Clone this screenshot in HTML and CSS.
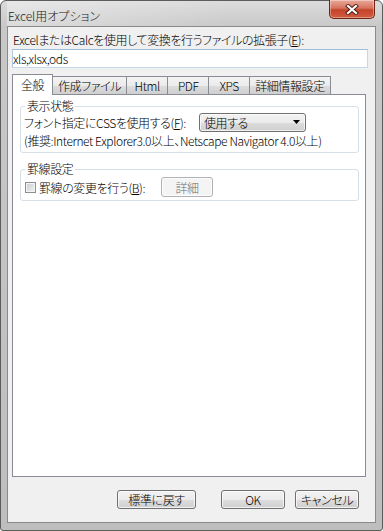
FILE: index.html
```html
<!DOCTYPE html>
<html lang="ja">
<head>
  <meta charset="UTF-8" />
  <title>Excel用オプション</title>
  <link rel="stylesheet" href="styles.css">
</head>
<body>

<div class="window">
  <div class="titlebar">
    <span class="title">Excel用オプション</span>
    <button class="close-btn" title="閉じる">
      <svg width="14" height="11" viewBox="0 0 14 11">
        <path d="M3 2 L11 9 M11 2 L3 9" stroke="#4a1c14" stroke-width="4" stroke-linecap="square" fill="none"/>
        <path d="M3 2 L11 9 M11 2 L3 9" stroke="#ffffff" stroke-width="2.2" stroke-linecap="square" fill="none"/>
      </svg>
    </button>
  </div>

  <div class="client">
    <label class="ext-label" for="extInput">ExcelまたはCalcを使用して変換を行うファイルの拡張子(<u>E</u>):</label>
    <input class="ext-input" id="extInput" type="text" value="xls,xlsx,ods" />

    <!-- Tabs -->
    <div class="tabs">
      <div class="tab active">全般</div>
      <div class="tab">作成ファイル</div>
      <div class="tab">Html</div>
      <div class="tab">PDF</div>
      <div class="tab">XPS</div>
      <div class="tab">詳細情報設定</div>
    </div>

    <div class="panel">
      <fieldset class="group group-view">
        <legend>表示状態</legend>
        <div class="row">
          <span class="row-label">フォント指定にCSSを使用する(<u>F</u>):</span>
          <div class="select">
            <span>使用する</span>
            <svg width="7" height="4" viewBox="0 0 7 4"><path d="M0 0 H7 L3.5 4 Z" fill="#000"/></svg>
          </div>
        </div>
        <div class="note">(推奨:Internet Explorer3.0以上、Netscape Navigator 4.0以上)</div>
      </fieldset>

      <fieldset class="group group-border">
        <legend>罫線設定</legend>
        <div class="row">
          <span class="checkbox"></span>
          <span class="check-label">罫線の変更を行う(<u>B</u>):</span>
          <button class="btn btn-detail" disabled>詳細</button>
        </div>
      </fieldset>
    </div>

    <div class="buttons">
      <button class="btn btn-reset">標準に戻す</button>
      <button class="btn btn-ok">OK</button>
      <button class="btn btn-cancel">キャンセル</button>
    </div>
  </div>
</div>

</body>
</html>
```

FILE: styles.css
```css
body {
  margin: 0;
  background: #ffffff;
  font-family: "Noto Sans CJK JP", "Liberation Sans", sans-serif;
  font-size: 12px;
  font-weight: 300;
  letter-spacing: -0.4px;
  font-feature-settings: "palt";
  color: #000;
}

.window {
  width: 383px;
  height: 531px;
  box-sizing: border-box;
  border: 1px solid #5c5c5c;
  border-radius: 6px 6px 3px 3px;
  background: linear-gradient(#dcdcdc, #c8c8c8 26px, #bebebe);
  padding: 0 6px 7px;
  display: flex;
  flex-direction: column;
}

.titlebar {
  height: 25px;
  display: flex;
  justify-content: space-between;
  align-items: flex-start;
  background: linear-gradient(90deg, rgba(255,255,255,0.35), rgba(255,255,255,0) 60%);
}

.title {
  padding: 6px 0 0 1px;
  line-height: 17px;
  font-size: 12px;
  letter-spacing: 0;
  color: #1a1a1a;
}

.close-btn {
  width: 46px;
  height: 19px;
  margin: -1px 1px 0 0;
  padding: 0;
  border: 1px solid #6e2518;
  border-top: none;
  border-radius: 0 0 5px 5px;
  background: linear-gradient(#e9a99a, #d6735d 45%, #c3432b 55%, #d35d40);
  box-shadow: inset 0 0 0 1px rgba(255,255,255,0.35);
  display: flex;
  align-items: center;
  justify-content: center;
}

.client {
  flex: 1;
  border: 1px solid #8a8a8a;
  background: #f0f0f0;
  display: flex;
  flex-direction: column;
}

.ext-label {
  margin: 6px 0 0 5px;
  line-height: 14px;
}

.ext-input {
  margin: 2px 0 0 4px;
  width: 356px;
  height: 19px;
  box-sizing: border-box;
  border: 1px solid;
  border-color: #a2bdd8 #c4d8ec #c4d8ec #b0c8e0;
  padding: 0;
  font: inherit;
  letter-spacing: inherit;
  font-feature-settings: "palt";
  background: #fff;
  outline: none;
}

.tabs {
  display: flex;
  align-items: flex-end;
  margin: 6px 0 0 6px;
  height: 20px;
}

.tab {
  position: relative;
  min-width: 42px;
  box-sizing: border-box;
  height: 18px;
  line-height: 17px;
  padding: 0 5px;
  text-align: center;
  border: 1px solid #898c95;
  border-bottom: none;
  margin-right: -1px;
  background: linear-gradient(#f3f3f3, #ebebeb 50%, #dddddd 51%, #cfcfcf);
}

.tab.active {
  z-index: 1;
  height: 21px;
  line-height: 19px;
  min-width: 41px;
  margin: 0 -1px -1px -2px;
  background: #ffffff;
}

.tab.active + .tab {
  margin-left: 0;
}

.panel {
  margin-left: 4px;
  width: 354px;
  height: 383px;
  box-sizing: border-box;
  border: 1px solid #898c95;
  background: #ffffff;
  display: flex;
  flex-direction: column;
}

.group {
  margin: 0 6px 0 7px;
  padding: 0 3px 4px;
  border: 1px solid #d5dfe5;
  border-radius: 3px;
}

.group legend {
  padding: 0 2px;
  margin-left: 1px;
  line-height: 12px;
}

.group-view {
  margin-top: 5px;
}

.group-border {
  margin-top: 10px;
  padding-top: 2px;
  padding-bottom: 3px;
}

.row {
  display: flex;
  align-items: center;
  height: 20px;
}

.row-label {
  width: 175px;
  white-space: nowrap;
}

.select {
  width: 107px;
  height: 19px;
  box-sizing: border-box;
  border: 1px solid #707070;
  border-radius: 3px;
  background: linear-gradient(#f2f2f2, #ebebeb 50%, #dddddd 51%, #cfcfcf);
  box-shadow: inset 0 0 0 1px rgba(255,255,255,0.7);
  display: flex;
  align-items: center;
  justify-content: space-between;
  padding: 0 5px 0 4px;
}

.note {
  margin-top: 2px;
  line-height: 14px;
}

.checkbox {
  width: 11px;
  height: 11px;
  margin-left: 1px;
  box-sizing: border-box;
  border: 1px solid #8e8f8f;
  background: linear-gradient(135deg, #c9cdd2, #f2f3f4);
  box-shadow: inset 0 0 0 1px #f4f4f4;
}

.check-label {
  margin-left: 3px;
  width: 122px;
  white-space: nowrap;
}

.btn {
  height: 19px;
  box-sizing: border-box;
  border: 1px solid #707070;
  border-radius: 3px;
  background: linear-gradient(#f2f2f2, #ebebeb 50%, #dddddd 51%, #cfcfcf);
  box-shadow: inset 0 0 0 1px rgba(255,255,255,0.7);
  font: inherit;
  letter-spacing: inherit;
  font-feature-settings: "palt";
  color: #000;
  padding: 0;
}

.btn-detail {
  width: 52px;
  height: 20px;
  border-color: #adb2b5;
  background: #f4f4f4;
  color: #6d6d6d;
}

.buttons {
  display: flex;
  justify-content: flex-end;
  margin: 13px 16px 0 0;
}

.btn-reset { width: 79px; }
.btn-ok { width: 64px; margin-left: 25px; }
.btn-cancel { width: 64px; margin-left: 10px; }
```
